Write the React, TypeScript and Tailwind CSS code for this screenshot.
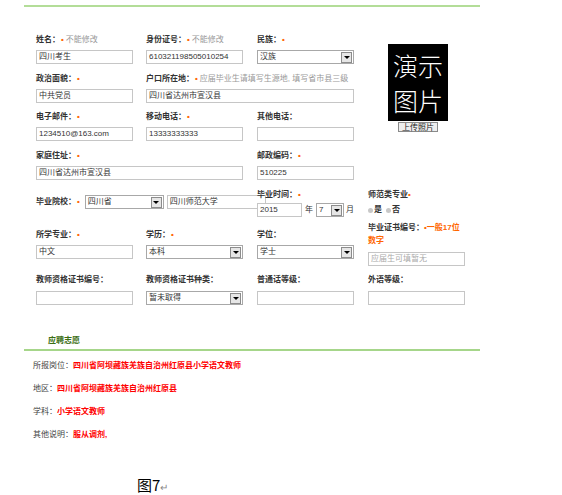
import React from 'react';

const Star = () => <span className="text-[#f60] font-bold ml-[1px]">•</span>;

function Label({ text, star, hint }: { text: string; star?: boolean; hint?: string }) {
  return (
    <div className="h-[10px] leading-[10px] text-[8px] font-bold text-[#333] whitespace-nowrap">
      {text}
      {star && <Star />}
      {hint && <span className="font-normal text-[#999] ml-[2px]">{hint}</span>}
    </div>
  );
}

function Box({ value, w = 'w-[97px]', placeholder }: { value?: string; w?: string; placeholder?: string }) {
  return (
    <div className={`${w} h-[14px] border border-[#c6c6c6] bg-white px-[2px] text-[8px] leading-[12px] whitespace-nowrap overflow-hidden ${placeholder ? 'text-[#aaa]' : 'text-[#333]'}`}>
      {value ?? placeholder}
    </div>
  );
}

function Select({ value, w = 'w-[97px]' }: { value: string; w?: string }) {
  return (
    <div className={`${w} h-[14px] border border-[#a8a8a8] bg-white pl-[2px] pr-[1px] flex items-center justify-between text-[8px] text-[#333]`}>
      <span className="leading-[12px] whitespace-nowrap">{value}</span>
      <div className="w-[11px] h-[11px] border border-[#8c8c8c] bg-[#e6e6e6] flex items-center justify-center">
        <div className="w-0 h-0 border-l-[3px] border-r-[3px] border-t-[3px] border-l-transparent border-r-transparent border-t-black" />
      </div>
    </div>
  );
}

function Field({ label, star, hint, children, gap = 'mt-[5px]' }: { label: string; star?: boolean; hint?: string; children: React.ReactNode; gap?: string }) {
  return (
    <div>
      <Label text={label} star={star} hint={hint} />
      <div className={gap}>{children}</div>
    </div>
  );
}

export default function App() {
  return (
    <div className="w-[562px] h-[495px] overflow-hidden bg-white pt-[5px] font-['Liberation_Sans','Noto_Sans_CJK_SC',sans-serif]">
      <div className="ml-[24px] w-[456px] h-[2px] bg-[#b3dd98]" />

      {/* 基本信息 */}
      <div className="mt-[28px] pl-[36px] grid grid-cols-[110px_111px_111px_111px] grid-rows-[39px_38px_39px_39px_40px_45px_auto]">
        <Field label="姓名：" star hint="不能修改"><Box value="四川考生" /></Field>
        <Field label="身份证号：" star hint="不能修改"><Box value="610321198505010254" /></Field>
        <Field label="民族：" star><Select value="汉族" /></Field>
        <div className="row-span-3 flex flex-col items-center w-[60px] ml-[20px] pt-[9px]">
          <div className="w-[60px] h-[77px] bg-black text-white text-[25px] leading-[35px] font-['Noto_Sans_CJK_SC',sans-serif] font-light flex flex-col items-center justify-center">
            <span>演示</span>
            <span>图片</span>
          </div>
          <div className="mt-[1px] h-[10px] px-[3px] border border-[#8a8a8a] bg-[#eee] text-[8px] leading-[8px] text-[#222] whitespace-nowrap font-['Noto_Sans_CJK_SC',sans-serif]">上传照片</div>
        </div>

        <Field label="政治面貌：" star><Box value="中共党员" /></Field>
        <div className="col-span-2">
          <Field label="户口所在地：" star hint="应届毕业生请填写生源地, 填写省市县三级"><Box value="四川省达州市宣汉县" w="w-[208px]" /></Field>
        </div>

        <Field label="电子邮件：" star><Box value="1234510@163.com" /></Field>
        <Field label="移动电话：" star><Box value="13333333333" /></Field>
        <Field label="其他电话："><Box value="" /></Field>

        <div className="col-span-2">
          <Field label="家庭住址：" star><Box value="四川省达州市宣汉县" w="w-[207px]" /></Field>
        </div>
        <Field label="邮政编码：" star><Box value="510225" /></Field>
        <div />

        <div className="col-span-2 self-start mt-[5px] flex items-center">
          <Label text="毕业院校：" star />
          <div className="ml-[5px]"><Select value="四川省" w="w-[79px]" /></div>
          <div className="ml-[3px]"><Box value="四川师范大学" w="w-[99px]" /></div>
        </div>
        <Field label="毕业时间：" star gap="mt-[3px]">
          <div className="flex items-center text-[8px] text-[#333]">
            <Box value="2015" w="w-[45px]" />
            <span className="ml-[3px]">年</span>
            <div className="ml-[3px]"><Select value="7" w="w-[28px]" /></div>
            <span className="ml-[2px]">月</span>
          </div>
        </Field>
        <div className="row-span-2 text-[8px] font-bold text-[#333]">
          <div className="h-[10px] leading-[10px] whitespace-nowrap">师范类专业<span className="text-[#f60]">•</span></div>
          <div className="mt-[5px] h-[10px] leading-[10px] flex items-center">
            <span className="w-[5px] h-[5px] rounded-full bg-[#c8c8c8] mr-[1px]" />是
            <span className="w-[5px] h-[5px] rounded-full bg-[#c8c8c8] ml-[4px] mr-[1px]" />否
          </div>
          <div className="mt-[8px] h-[10px] leading-[10px] whitespace-nowrap">
            毕业证书编号：<span className="text-[#f60]">•一般17位</span>
          </div>
          <div className="mt-[3px] h-[10px] leading-[10px] text-[#f60]">数字</div>
          <div className="mt-[6px] font-normal"><Box placeholder="应届生可填暂无" /></div>
        </div>

        <Field label="所学专业：" star><Box value="中文" /></Field>
        <Field label="学历：" star><Select value="本科" /></Field>
        <Field label="学位："><Select value="学士" /></Field>

        <Field label="教师资格证书编号：" gap="mt-[6px]"><Box value="" /></Field>
        <Field label="教师资格证书种类：" gap="mt-[6px]"><Select value="暂未取得" /></Field>
        <Field label="普通话等级：" gap="mt-[6px]"><Box value="" /></Field>
        <Field label="外语等级：" gap="mt-[6px]"><Box value="" /></Field>
      </div>

      {/* 应聘志愿 */}
      <div className="mt-[31px] pl-[48px] h-[10px] leading-[10px] text-[8px] font-bold text-[#3a6e12]">应聘志愿</div>
      <div className="mt-[3px] ml-[24px] w-[456px] h-[2px] bg-[#a6d68a]" />
      <div className="mt-[10px] pl-[33px] flex flex-col gap-[13px] text-[8px] leading-[10px]">
        {[
          ['所报岗位：', '四川省阿坝藏族羌族自治州红原县小学语文教师'],
          ['地区：', '四川省阿坝藏族羌族自治州红原县'],
          ['学科：', '小学语文教师'],
          ['其他说明：', '服从调剂,'],
        ].map(([k, v]) => (
          <div key={k} className="h-[10px] whitespace-nowrap">
            <span className="text-[#444]">{k}</span>
            <span className="text-[#f00] font-bold">{v}</span>
          </div>
        ))}
      </div>

      <div className="mt-[36px] pl-[137px] text-[15px] leading-[18px] text-black font-['Noto_Sans_CJK_SC',sans-serif]">
        图7<span className="text-[10px] text-[#888]">↵</span>
      </div>
    </div>
  );
}
